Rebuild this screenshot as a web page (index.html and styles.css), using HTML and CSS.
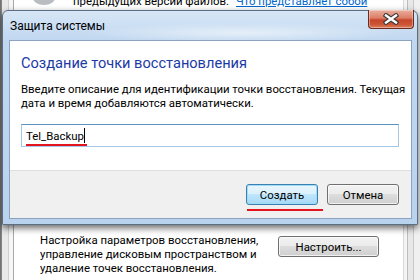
FILE: index.html
```html
<!DOCTYPE html>
<html lang="ru">
<head>
    <meta charset="UTF-8">
    <title>Защита системы</title>
    <link rel="stylesheet" href="styles.css">
</head>
<body>
    <div class="desk">
        <div class="rail-left"></div>
        <div class="page">
            <div class="page-top">
                <svg class="page-icon" viewBox="0 0 26 16" width="26" height="16">
                    <ellipse cx="13" cy="4" rx="11" ry="7" fill="#b9bdc2"/>
                    <ellipse cx="10" cy="2" rx="5" ry="3" fill="#e3e5e8"/>
                </svg>
                <span class="page-text">предыдущих версий файлов.</span>
                <a class="page-link" href="#">Что представляет собой</a>
            </div>
            <div class="page-bottom">
                <p class="page-note">Настройка параметров восстановления,<br>управление дисковым пространством и<br>удаление точек восстановления.</p>
                <button class="btn btn-page">Настроить...</button>
            </div>
        </div>
        <div class="rail-right"></div>
    </div>

    <div class="dialog">
        <div class="titlebar">
            <span class="title">Защита системы</span>
            <button class="close" aria-label="Закрыть">
                <svg viewBox="0 0 16 12" width="16" height="12">
                    <path d="M3,2.5 L13,9.5 M13,2.5 L3,9.5" stroke="#3a3a3a" stroke-width="4.6" stroke-linecap="square"/>
                    <path d="M3,2.5 L13,9.5 M13,2.5 L3,9.5" stroke="#ffffff" stroke-width="2.4" stroke-linecap="square"/>
                </svg>
            </button>
        </div>
        <div class="client">
            <div class="main">
                <h1 class="heading">Создание точки восстановления</h1>
                <p class="desc">Введите описание для идентификации точки восстановления. Текущая<br>дата и время добавляются автоматически.</p>
                <div class="field">
                    <span class="field-text">Tel_Backup</span><span class="caret"></span>
                    <span class="mark mark-field"></span>
                </div>
            </div>
            <div class="footer">
                <div class="btn-wrap">
                    <button class="btn btn-default">Создать</button>
                    <span class="mark mark-btn"></span>
                </div>
                <button class="btn">Отмена</button>
            </div>
        </div>
    </div>
</body>
</html>
```

FILE: styles.css
```css
html, body {
    margin: 0;
    padding: 0;
    width: 420px;
    height: 280px;
    overflow: hidden;
    font-family: Roboto, "Noto Sans", sans-serif;
    font-size: 11.4px;
    color: #000;
}
body {
    position: relative;
    background: #ffffff;
}

/* window behind the dialog */
.desk {
    display: flex;
    height: 280px;
}
.rail-left {
    width: 14px;
    background: linear-gradient(to right, #6d6d6d 0, #8a8a8a 2px, #e9e9e9 2px, #e9e9e9 8px, #cfcfcf 8px, #cfcfcf 9px, #f6f6f6 9px, #f6f6f6 13px, #a9a9a9 13px);
}
.page {
    flex: 1;
    display: flex;
    flex-direction: column;
    justify-content: space-between;
    background: #ffffff;
}
.page-top {
    display: flex;
    align-items: flex-start;
    margin-top: -6px;
    height: 16px;
    white-space: nowrap;
}
.page-icon {
    margin-left: 17px;
}
.page-text {
    margin-left: 16px;
    line-height: 15px;
}
.page-link {
    margin-left: 7px;
    color: #0066cc;
    line-height: 15px;
}
.page-bottom {
    display: flex;
    align-items: flex-start;
    padding: 0 0 5px 26px;
}
.page-note {
    margin: 0;
    width: 238px;
    line-height: 14px;
    white-space: nowrap;
}
.rail-right {
    width: 17px;
    background: linear-gradient(to right, #d8d8d8 0, #d8d8d8 1px, #f4f4f4 1px, #f4f4f4 4px, #bdbdbd 4px, #bdbdbd 5px, #e8e8e8 5px, #e8e8e8 10px, #c9c9c9 10px, #c9c9c9 11px, #f0f0f0 11px);
}

/* dialog */
.dialog {
    position: absolute;
    left: 2px;
    top: 10px;
    width: 416px;
    height: 215px;
    box-sizing: border-box;
    padding: 0 5px 5px 6px;
    display: flex;
    flex-direction: column;
    border: 1px solid #5a6e86;
    border-radius: 6px 6px 0 0;
    background:
        radial-gradient(ellipse 160px 10px at 240px 22px, rgba(255,255,255,0.55), rgba(255,255,255,0)),
        linear-gradient(to bottom, #d7e6f6 0, #c0d7f0 30px, #b9d2ee 100%);
    box-shadow: 0 3px 7px rgba(0,0,0,0.6);
}
.titlebar {
    height: 29px;
    display: flex;
    align-items: flex-start;
    justify-content: space-between;
}
.title {
    margin: 7px 0 0 1px;
    font-size: 12px;
    line-height: 16px;
    color: #000;
}
.close {
    margin: -1px -2px 0 0;
    width: 46px;
    height: 19px;
    padding: 0;
    display: flex;
    align-items: center;
    justify-content: center;
    border: 1px solid #6c2a20;
    border-top: none;
    border-radius: 0 0 4px 4px;
    background: linear-gradient(to bottom, #eab0a0 0, #dc7c64 45%, #c6462b 55%, #cb5433 80%, #dc8060 100%);
    box-shadow: inset 0 0 0 1px rgba(255,255,255,0.35);
}
.client {
    flex: 1;
    display: flex;
    flex-direction: column;
    border: 1px solid #8ba3c1;
}
.main {
    height: 129px;
    background: #ffffff;
    padding: 12px 12px 0 11px;
    box-sizing: border-box;
}
.heading {
    margin: 0;
    font-size: 14.6px;
    font-weight: normal;
    line-height: 20px;
    color: #1a3aa6;
}
.desc {
    margin: 9px 0 0;
    line-height: 14px;
    white-space: nowrap;
}
.field {
    position: relative;
    margin-top: 14px;
    height: 23px;
    box-sizing: border-box;
    border: 1px solid #a7c8e4;
    border-top-color: #5a92c2;
    padding: 0 4px;
    display: flex;
    align-items: center;
}
.caret {
    width: 1px;
    height: 15px;
    background: #000;
}
.footer {
    flex: 1;
    background: #f0f0f0;
    border-top: 1px solid #dfdfdf;
    display: flex;
    justify-content: flex-end;
    align-items: flex-start;
    gap: 9px;
    padding: 13px 12px 0 0;
}
.btn-wrap {
    position: relative;
}
.btn {
    width: 72px;
    height: 21px;
    padding: 0;
    font-family: inherit;
    font-size: 11.4px;
    color: #000;
    border: 1px solid #707070;
    border-radius: 3px;
    background: linear-gradient(to bottom, #f2f2f2 0, #ebebeb 50%, #dddddd 50%, #cfcfcf 100%);
    box-shadow: inset 0 0 0 1px rgba(255,255,255,0.7);
}
.btn-default {
    border-color: #3c7fb1;
    box-shadow: inset 0 0 0 1px #9fdcf7;
    background: linear-gradient(to bottom, #eaf6fd 0, #d9f0fc 50%, #bee6fd 50%, #a7d9f5 100%);
}
.btn-page {
    margin-top: 3px;
    width: 101px;
}

/* red annotation lines */
.mark {
    position: absolute;
    height: 2px;
    background: #e4141f;
}
.mark-field {
    left: 4px;
    top: 19px;
    width: 61px;
}
.mark-btn {
    left: 1px;
    top: 25px;
    width: 76px;
}
```
